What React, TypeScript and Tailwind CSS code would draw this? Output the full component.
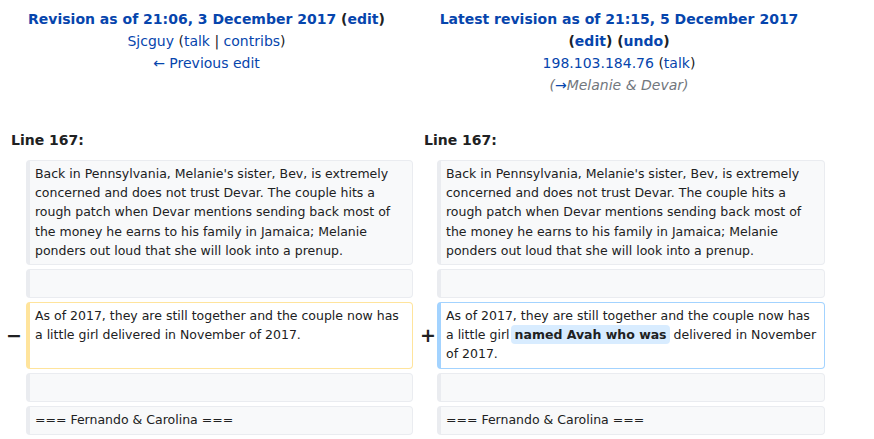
const font = "font-['DejaVu_Sans',sans-serif]";

function Box({
  kind = "context",
  children,
}: {
  kind?: "context" | "deleted" | "added";
  children?: React.ReactNode;
}) {
  const tone =
    kind === "deleted"
      ? "bg-white border-[#ffe49c]"
      : kind === "added"
        ? "bg-white border-[#a3d3ff]"
        : "bg-[#f8f9fa] border-[#eaecf0]";
  return (
    <div
      className={`${tone} min-h-[29px] rounded-[4px] border border-l-4 pt-[3px] pb-[4px] pl-[5px] pr-[6px] text-[12.5px] leading-[19.2px] text-[#202122]`}
    >
      {children}
    </div>
  );
}

function Marker({ sign, side }: { sign?: string; side?: "left" | "right" }) {
  return (
    <div
      className={`flex items-center justify-end text-[19px] font-bold text-[#202122] ${side === "right" ? "pr-[1px]" : "pr-[4px]"}`}
    >
      {sign}
    </div>
  );
}

export default function App() {
  return (
    <div className={`${font} w-[874px] h-[439px] overflow-hidden bg-white text-[#202122]`}>
      <div className="grid grid-cols-[26px_387px_24px_388px] gap-y-[4px]">
        {/* titles */}
        <div className="col-span-2 pt-[8px] text-center text-[14px] leading-[22px]">
          <div className="font-bold">
            <a className="text-[#0645ad]">Revision as of 21:06, 3 December 2017</a>{" "}
            (<a className="text-[#0645ad]">edit</a>)
          </div>
          <div>
            <a className="text-[#0645ad]">Sjcguy</a> (<a className="text-[#0645ad]">talk</a> |{" "}
            <a className="text-[#0645ad]">contribs</a>)
          </div>
          <div>
            <a className="text-[#0645ad]">← Previous edit</a>
          </div>
        </div>
        <div className="col-span-2 pt-[8px] text-center text-[14px] leading-[22px]">
          <div className="font-bold">
            <a className="text-[#0645ad]">Latest revision as of 21:15, 5 December 2017</a>
          </div>
          <div className="font-bold">
            (<a className="text-[#0645ad]">edit</a>) (<a className="text-[#0645ad]">undo</a>)
          </div>
          <div>
            <a className="text-[#0645ad]">198.103.184.76</a> (<a className="text-[#0645ad]">talk</a>)
          </div>
          <div className="italic text-[#72777d]">
            (<a className="text-[#0645ad]">→</a>Melanie &amp; Devar)
          </div>
        </div>

        {/* line numbers */}
        <div className="col-span-2 pl-[11px] pt-[30px] pb-[6px] text-[14px] font-bold leading-[20px]">
          Line 167:
        </div>
        <div className="col-span-2 pl-[11px] pt-[30px] pb-[6px] text-[14px] font-bold leading-[20px]">
          Line 167:
        </div>

        <Marker />
        <Box>
          Back in Pennsylvania, Melanie's sister, Bev, is extremely concerned and does not trust
          Devar. The couple hits a rough patch when Devar mentions sending back most of the money
          he earns to his family in Jamaica; Melanie ponders out loud that she will look into a
          prenup.
        </Box>
        <Marker />
        <Box>
          Back in Pennsylvania, Melanie's sister, Bev, is extremely concerned and does not trust
          Devar. The couple hits a rough patch when Devar mentions sending back most of the money
          he earns to his family in Jamaica; Melanie ponders out loud that she will look into a
          prenup.
        </Box>

        <Marker />
        <Box />
        <Marker />
        <Box />

        <Marker sign="−" side="left" />
        <Box kind="deleted">
          As of 2017, they are still together and the couple now has a little girl delivered in
          November of 2017.
        </Box>
        <Marker sign="+" side="right" />
        <Box kind="added">
          As of 2017, they are still together and the couple now has a little girl
          <span className="ml-[1px] rounded-[4px] bg-[#d8ecff] py-[2px] pl-[4px] pr-[3px] font-bold">
            named Avah who was
          </span>{" "}
          delivered in November of 2017.
        </Box>

        <Marker />
        <Box />
        <Marker />
        <Box />

        <Marker />
        <Box>=== Fernando &amp; Carolina ===</Box>
        <Marker />
        <Box>=== Fernando &amp; Carolina ===</Box>
      </div>
    </div>
  );
}
